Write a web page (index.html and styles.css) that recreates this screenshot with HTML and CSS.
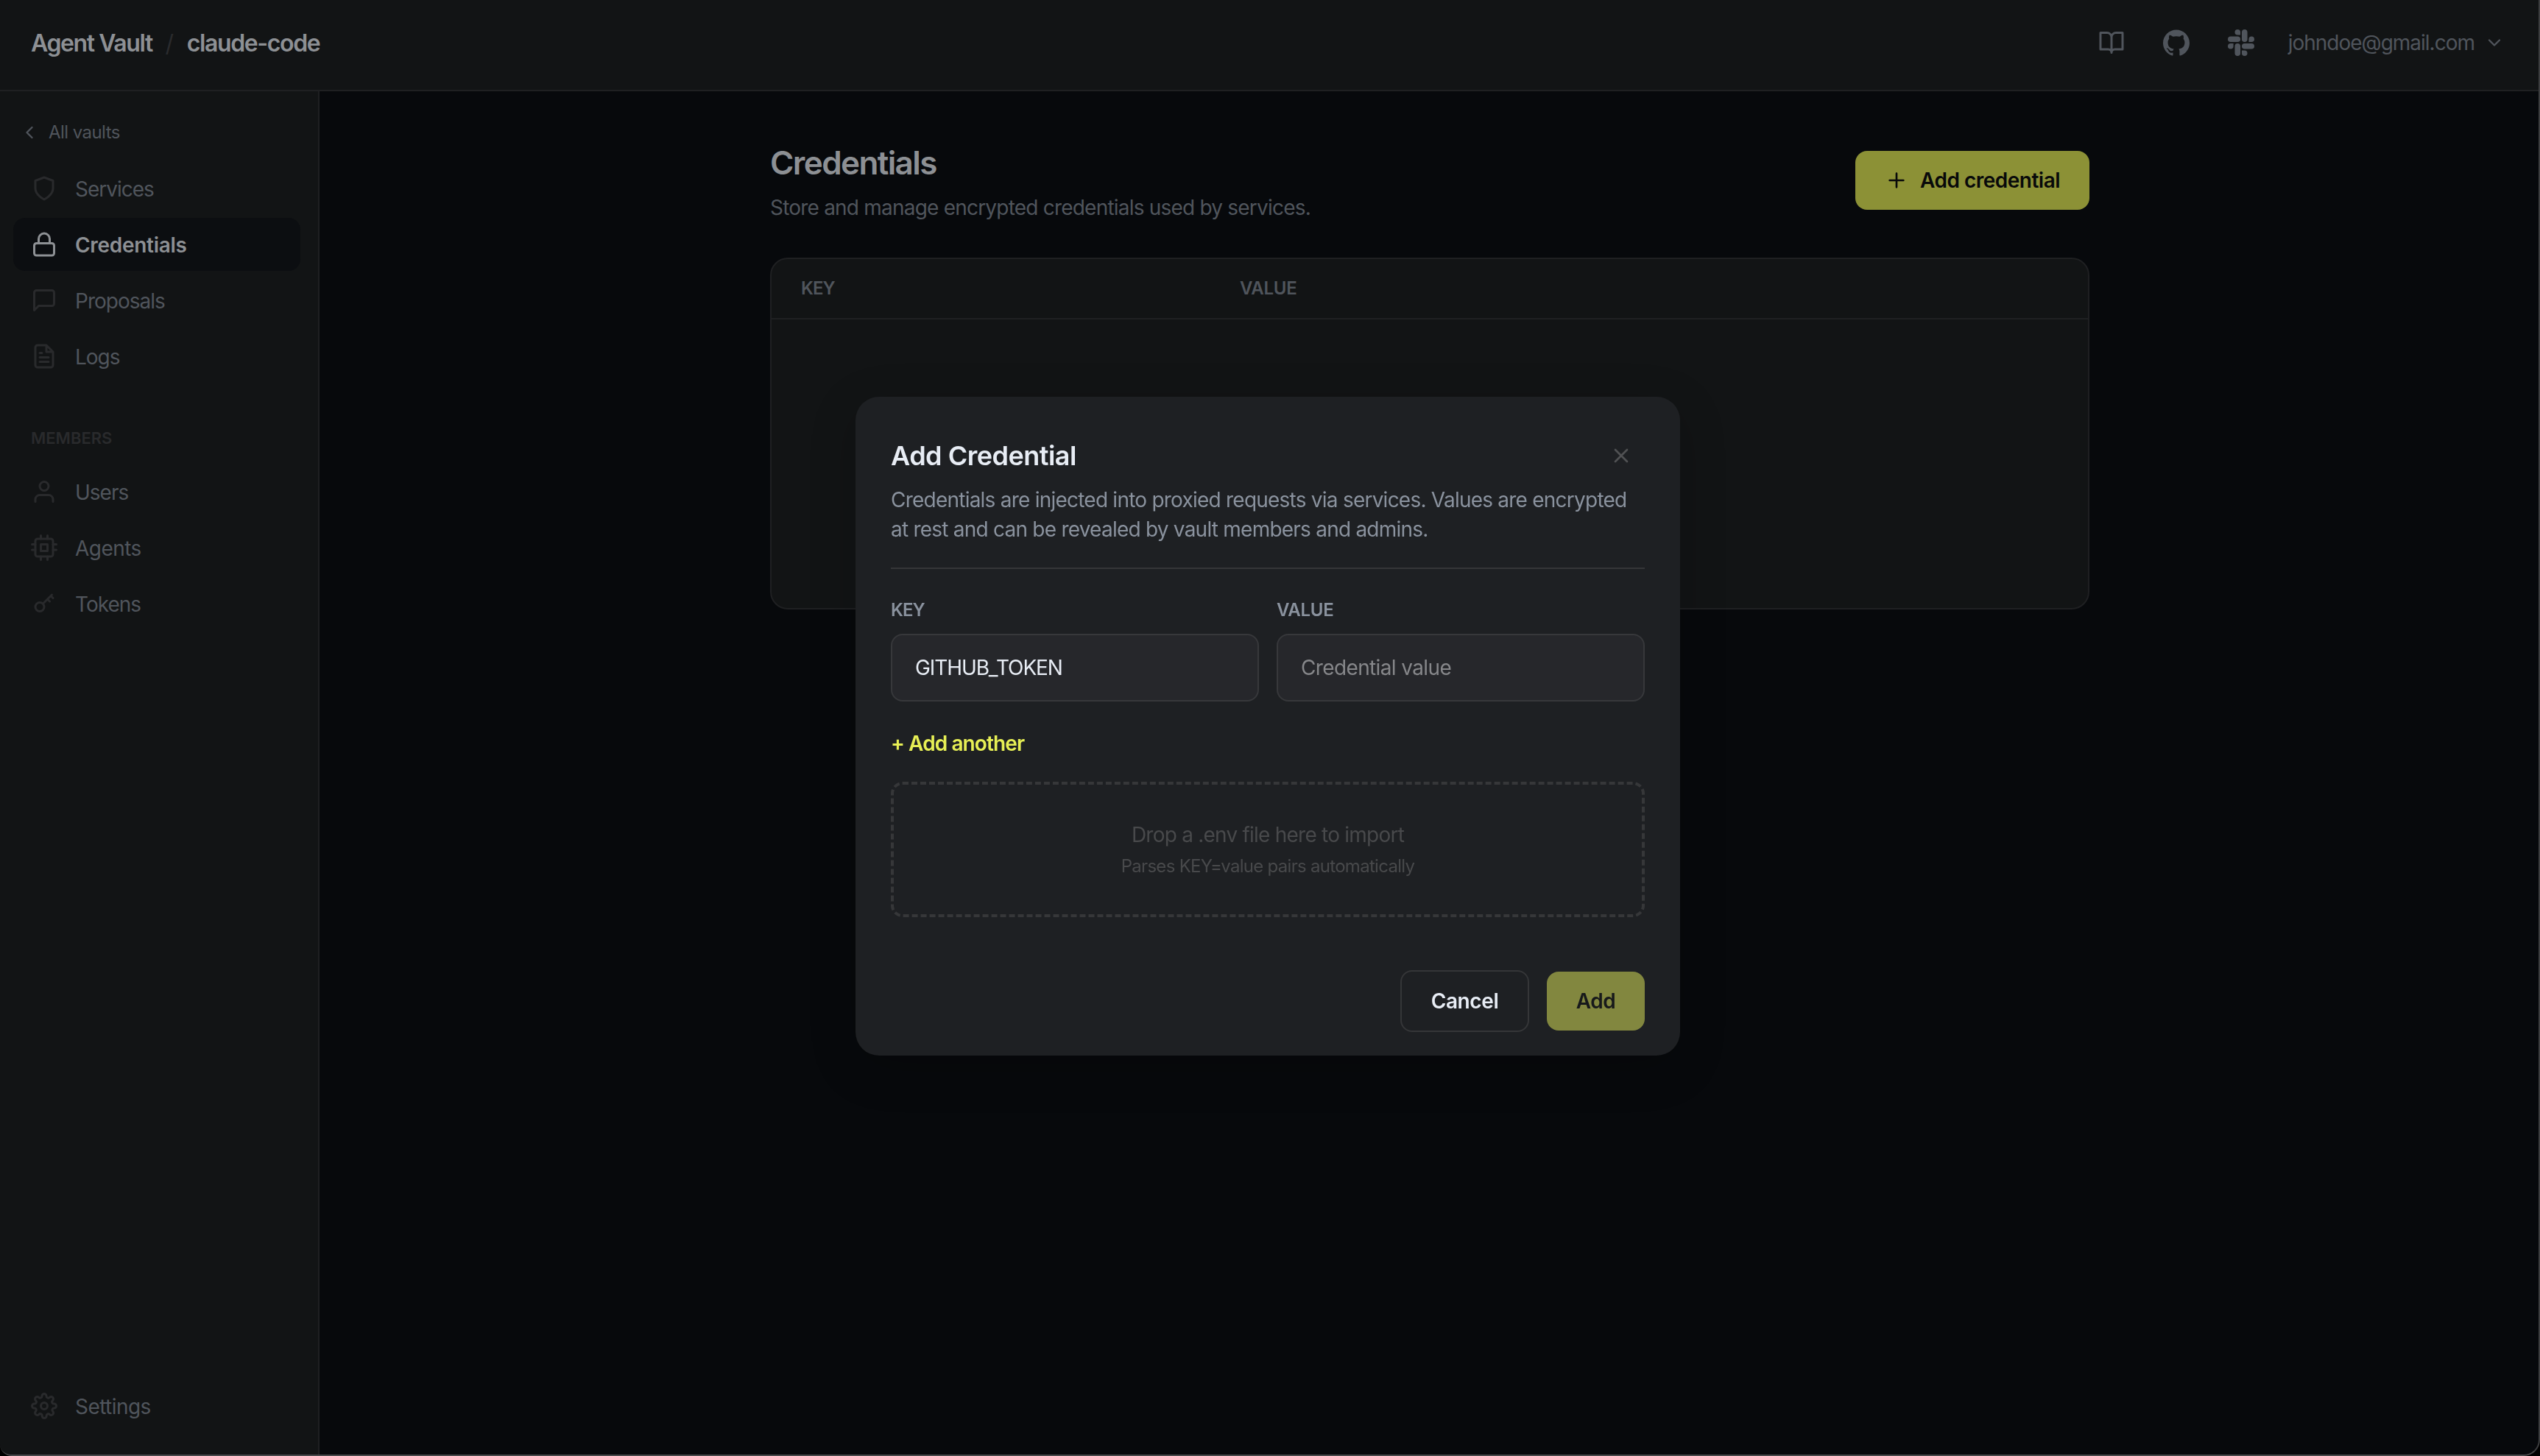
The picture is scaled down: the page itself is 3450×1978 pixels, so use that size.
FILE: index.html
```html
<!DOCTYPE html>
<html lang="en">
<head>
<meta charset="utf-8">
<title>Agent Vault</title>
<link rel="stylesheet" href="styles.css">
</head>
<body>
<div class="window">
  <header class="topbar">
    <div class="crumbs">
      <span class="brand">Agent Vault</span>
      <span class="slash">/</span>
      <span class="vault">claude-code</span>
    </div>
    <div class="topbar-links">
      <svg class="icon" viewBox="0 0 24 24"><path d="M2 3h6a4 4 0 0 1 4 4v14a3 3 0 0 0-3-3H2zM22 3h-6a4 4 0 0 0-4 4v14a3 3 0 0 1 3-3h7z"/></svg>
      <svg class="icon solid" viewBox="0 0 24 24"><path d="M12 .297c-6.63 0-12 5.373-12 12 0 5.303 3.438 9.8 8.205 11.385.6.113.82-.258.82-.577 0-.285-.01-1.04-.015-2.04-3.338.724-4.042-1.61-4.042-1.61C4.422 18.07 3.633 17.7 3.633 17.7c-1.087-.744.084-.729.084-.729 1.205.084 1.838 1.236 1.838 1.236 1.07 1.835 2.809 1.305 3.495.998.108-.776.417-1.305.76-1.605-2.665-.3-5.466-1.332-5.466-5.93 0-1.31.465-2.38 1.235-3.22-.135-.303-.54-1.523.105-3.176 0 0 1.005-.322 3.3 1.23.96-.267 1.98-.399 3-.405 1.02.006 2.04.138 3 .405 2.28-1.552 3.285-1.23 3.285-1.23.645 1.653.24 2.873.12 3.176.765.84 1.23 1.91 1.23 3.22 0 4.61-2.805 5.625-5.475 5.92.42.36.81 1.096.81 2.22 0 1.606-.015 2.896-.015 3.286 0 .315.21.69.825.57C20.565 22.092 24 17.592 24 12.297c0-6.627-5.373-12-12-12"/></svg>
      <svg class="icon solid" viewBox="0 0 24 24"><path d="M5.042 15.165a2.528 2.528 0 0 1-2.52 2.523A2.528 2.528 0 0 1 0 15.165a2.527 2.527 0 0 1 2.522-2.52h2.52v2.52zM6.313 15.165a2.527 2.527 0 0 1 2.521-2.52 2.527 2.527 0 0 1 2.521 2.52v6.313A2.528 2.528 0 0 1 8.834 24a2.528 2.528 0 0 1-2.521-2.522v-6.313zM8.834 5.042a2.528 2.528 0 0 1-2.521-2.52A2.528 2.528 0 0 1 8.834 0a2.528 2.528 0 0 1 2.521 2.522v2.52H8.834zM8.834 6.313a2.528 2.528 0 0 1 2.521 2.521 2.528 2.528 0 0 1-2.521 2.521H2.522A2.528 2.528 0 0 1 0 8.834a2.528 2.528 0 0 1 2.522-2.521h6.312zM18.956 8.834a2.528 2.528 0 0 1 2.522-2.521A2.528 2.528 0 0 1 24 8.834a2.528 2.528 0 0 1-2.522 2.521h-2.522V8.834zM17.688 8.834a2.528 2.528 0 0 1-2.523 2.521 2.527 2.527 0 0 1-2.52-2.521V2.522A2.527 2.527 0 0 1 15.165 0a2.528 2.528 0 0 1 2.523 2.522v6.312zM15.165 18.956a2.528 2.528 0 0 1 2.523 2.522A2.528 2.528 0 0 1 15.165 24a2.527 2.527 0 0 1-2.52-2.522v-2.522h2.52zM15.165 17.688a2.527 2.527 0 0 1-2.52-2.523 2.526 2.526 0 0 1 2.52-2.52h6.313A2.527 2.527 0 0 1 24 15.165a2.528 2.528 0 0 1-2.522 2.523h-6.313z"/></svg>
    </div>
    <div class="account">
      <span class="email">johndoe@gmail.com</span>
      <svg class="icon chevron" viewBox="0 0 24 24"><path d="m6 9 6 6 6-6"/></svg>
    </div>
  </header>

  <div class="body">
    <aside class="sidebar">
      <a class="back">
        <svg class="icon chevron" viewBox="0 0 24 24"><path d="m15 18-6-6 6-6"/></svg>
        <span class="back-label">All vaults</span>
      </a>
      <nav class="nav">
        <a class="nav-item"><svg class="icon" viewBox="0 0 24 24"><path d="M12 22s8-4 8-10V5l-8-3-8 3v7c0 6 8 10 8 10z"/></svg><span>Services</span></a>
        <a class="nav-item active"><svg class="icon" viewBox="0 0 24 24"><rect x="3" y="11" width="18" height="11" rx="2"/><path d="M7 11V7a5 5 0 0 1 10 0v4"/></svg><span>Credentials</span></a>
        <a class="nav-item"><svg class="icon" viewBox="0 0 24 24"><path d="M21 15a2 2 0 0 1-2 2H7l-4 4V5a2 2 0 0 1 2-2h14a2 2 0 0 1 2 2z"/></svg><span>Proposals</span></a>
        <a class="nav-item"><svg class="icon" viewBox="0 0 24 24"><path d="M14 2H6a2 2 0 0 0-2 2v16a2 2 0 0 0 2 2h12a2 2 0 0 0 2-2V8zM14 2v6h6M16 13H8M16 17H8M10 9H8"/></svg><span>Logs</span></a>
      </nav>
      <h2 class="nav-heading">MEMBERS</h2>
      <nav class="nav">
        <a class="nav-item"><svg class="icon" viewBox="0 0 24 24"><path d="M20 21v-2a4 4 0 0 0-4-4H8a4 4 0 0 0-4 4v2"/><circle cx="12" cy="7" r="4"/></svg><span>Users</span></a>
        <a class="nav-item nav-loose"><svg class="icon" viewBox="0 0 24 24"><rect x="4" y="4" width="16" height="16" rx="2"/><path d="M9 9h6v6H9zM9 1v3M15 1v3M9 20v3M15 20v3M20 9h3M20 14h3M1 9h3M1 14h3"/></svg><span>Agents</span></a>
        <a class="nav-item"><svg class="icon" viewBox="0 0 24 24"><circle cx="8" cy="15" r="4"/><path d="M10.85 12.15 19 4M18 5l2 2M15 8l2 2"/></svg><span>Tokens</span></a>
      </nav>
      <nav class="nav nav-bottom">
        <a class="nav-item nav-loose"><svg class="icon" viewBox="0 0 24 24"><circle cx="12" cy="12" r="3"/><path d="M19.4 15a1.65 1.65 0 0 0 .33 1.82l.06.06a2 2 0 0 1-2.83 2.83l-.06-.06a1.65 1.65 0 0 0-2.8 1.17V21a2 2 0 0 1-4 0v-.09a1.65 1.65 0 0 0-2.88-1.26l-.06.06a2 2 0 0 1-2.83-2.83l.06-.06A1.65 1.65 0 0 0 3.09 14H3a2 2 0 0 1 0-4h.09a1.65 1.65 0 0 0 1.26-2.88l-.06-.06a2 2 0 0 1 2.83-2.83l.06.06A1.65 1.65 0 0 0 10 3.09V3a2 2 0 0 1 4 0v.09a1.65 1.65 0 0 0 2.82 1.2l.06-.06a2 2 0 0 1 2.83 2.83l-.06.06A1.65 1.65 0 0 0 20.91 10H21a2 2 0 0 1 0 4h-.09a1.65 1.65 0 0 0-1.51 1z"/></svg><span>Settings</span></a>
      </nav>
    </aside>

    <main class="main">
      <div class="page">
        <div class="page-head">
          <div>
            <h1 class="page-title">Credentials</h1>
            <p class="page-sub">Store and manage encrypted credentials used by services.</p>
          </div>
          <button class="btn btn-accent btn-new"><svg class="icon" viewBox="0 0 24 24"><path d="M12 5v14M5 12h14"/></svg><span>Add credential</span></button>
        </div>
        <section class="table">
          <div class="table-head"><span class="key">KEY</span><span class="value">VALUE</span></div>
        </section>
      </div>
    </main>
  </div>
</div>

<div class="overlay">
  <div class="dialog" role="dialog">
    <div class="dialog-head">
      <h2 class="dialog-title">Add Credential</h2>
      <button class="close"><svg class="icon" viewBox="0 0 24 24"><path d="M18 6 6 18M6 6l12 12"/></svg></button>
    </div>
    <p class="dialog-text">Credentials are injected into proxied requests via services. Values are encrypted<br>at rest and can be revealed by vault members and admins.</p>
    <div class="fields">
      <div class="field"><span class="label key">KEY</span><div class="input"><span class="filled">GITHUB_TOKEN</span></div></div>
      <div class="field"><span class="label value">VALUE</span><div class="input"><span class="placeholder">Credential value</span></div></div>
    </div>
    <div class="add-another">+ Add another</div>
    <div class="drop">
      <div class="drop-title">Drop a .env file here to import</div>
      <div class="drop-hint">Parses KEY=value pairs automatically</div>
    </div>
    <div class="actions">
      <button class="btn btn-outline">Cancel</button>
      <button class="btn btn-accent btn-disabled">Add</button>
    </div>
  </div>
</div>
</body>
</html>
```
FILE: styles.css
```css
* { box-sizing: border-box; }

body {
  margin: 0;
  background: #000;
  font-family: Inter, "Liberation Sans", sans-serif;
  font-size: 28px;
  color: #50555c;
}

h1, h2, p { margin: 0; }
button { font: inherit; color: inherit; border: 0; background: none; padding: 0; margin: 0; }

.icon {
  display: block;
  flex: none;
  width: 36px;
  height: 36px;
  fill: none;
  stroke: currentColor;
  stroke-width: 2;
  stroke-linecap: round;
  stroke-linejoin: round;
}
.icon.solid { fill: currentColor; stroke: none; }
.icon.chevron { width: 28px; height: 28px; }

.window {
  display: flex;
  flex-direction: column;
  height: 1978px;
  overflow: hidden;
  background: #07090c;
  border-right: 2px solid #3c3d3f;
  border-bottom: 2px solid #48494b;
  border-radius: 0 0 22px 16px;
}

.topbar {
  display: flex;
  flex: none;
  align-items: center;
  height: 124px;
  padding: 0 46px 6px 42px;
  background: #121415;
  border-bottom: 2px solid #1f2022;
}
.crumbs { display: flex; gap: 15px; font-size: 32px; font-weight: 600; letter-spacing: -1.4px; color: #8d9094; }
.slash { width: 17px; font-weight: 400; letter-spacing: 0; text-align: center; color: #2a2b2d; }
.topbar-links { display: flex; gap: 52px; margin-left: auto; }
.account { display: flex; align-items: center; gap: 13px; margin-left: 46px; }
.email { letter-spacing: -1px; }

.body { display: flex; flex: 1; }

.sidebar {
  display: flex;
  flex-direction: column;
  width: 434px;
  padding: 24px 24px 30px 18px;
  background: #121415;
  border-right: 2px solid #1f2022;
}
.back { display: flex; align-items: center; gap: 12px; height: 64px; margin-bottom: 8px; padding-left: 8px; font-size: 24px; letter-spacing: -0.55px; }
.back-label { padding-bottom: 2px; }
.nav { display: flex; flex-direction: column; gap: 4px; }
.nav-item { display: flex; align-items: center; gap: 24px; height: 72px; padding: 0 24px; border-radius: 16px; letter-spacing: -1px; }
.nav-item span { padding-top: 1px; }
.nav-item.nav-loose { letter-spacing: -0.55px; }
.nav-item .icon { color: #292a2c; }
.nav-item.active { background: #0c0e11; color: #8d9094; font-weight: 600; letter-spacing: -0.3px; }
.nav-item.active .icon { color: #8d9094; }
.nav-heading { margin: 53px 0 15px; padding-left: 24px; font-size: 22px; line-height: 44px; font-weight: 600; color: #292a2c; }
.nav-bottom { margin-top: auto; }

.main { flex: 1; padding: 67px 0 0 612px; }
.page { width: 1792px; }
.page-head { display: flex; justify-content: space-between; align-items: flex-start; margin-bottom: 47px; }
.page-title { font-size: 44px; line-height: 60px; font-weight: 600; letter-spacing: -1.6px; color: #8d9094; }
.page-sub { margin-top: 10px; line-height: 42px; letter-spacing: -0.79px; }

.btn { display: flex; align-items: center; justify-content: center; height: 80px; border-radius: 16px; font-weight: 600; letter-spacing: -0.4px; }
.btn-accent { background: #8c9136; color: #08090a; }
.btn-new { gap: 16px; width: 318px; margin-top: 14px; padding-left: 40px; justify-content: flex-start; letter-spacing: -0.5px; }
.btn-new .icon { width: 32px; height: 32px; }

.table { height: 478px; background: #121415; border: 2px solid #1f2022; border-radius: 24px; }
.table-head {
  display: grid;
  grid-template-columns: 596px 1fr;
  justify-items: start;
  align-items: center;
  height: 82px;
  padding: 0 40px 1px;
  border-bottom: 2px solid #1f2022;
  font-size: 24px;
  font-weight: 600;
}
.key { letter-spacing: -0.9px; }
.value { letter-spacing: -0.3px; }

.overlay { position: fixed; inset: 0; display: flex; align-items: flex-start; padding: 539px 0 0 1162px; }
.dialog {
  width: 1120px;
  padding: 52px 48px 32px;
  background: #1e2023;
  border-radius: 32px;
  box-shadow: 0 16px 64px rgba(0, 0, 0, 0.2);
}
.dialog-head { display: flex; justify-content: space-between; align-items: center; height: 56px; }
.dialog-title { font-size: 36px; line-height: 56px; font-weight: 600; letter-spacing: -0.5px; color: #e8edf5; }
.close { display: flex; align-items: center; justify-content: center; width: 64px; height: 56px; color: #505153; }
.close .icon { width: 32px; height: 32px; }
.dialog-text { margin-top: 12px; padding-bottom: 32px; border-bottom: 2px solid #353638; line-height: 40px; white-space: nowrap; letter-spacing: -0.77px; color: #8a929e; }
.fields { display: grid; grid-template-columns: 1fr 1fr; gap: 24px; margin-top: 41px; }
.field { display: flex; flex-direction: column; align-items: stretch; gap: 17px; }
.label { align-self: flex-start; font-size: 24px; line-height: 30px; font-weight: 600; color: #8a929e; }
.input { display: flex; align-items: center; height: 92px; padding: 0 31px; background: #26272b; border: 2px solid #37383b; border-radius: 16px; color: #e8edf5; }
.filled { letter-spacing: -1.1px; }
.placeholder { letter-spacing: -0.63px; color: #86878a; }
.add-another { margin-top: 37px; line-height: 40px; font-weight: 600; letter-spacing: -0.9px; color: #e7ef55; }
.drop { height: 184px; margin-top: 32px; padding-top: 48px; border: 4px dashed #363739; border-radius: 16px; text-align: center; color: #48494b; }
.drop-title { line-height: 40px; letter-spacing: -0.77px; }
.drop-hint { margin-top: 5px; font-size: 24px; line-height: 36px; letter-spacing: -0.71px; }
.actions { display: flex; justify-content: flex-end; align-items: center; gap: 24px; height: 84px; margin-top: 72px; }
.btn-outline { width: 175px; height: 84px; border: 2px solid #353638; color: #e8edf5; }
.btn-disabled { width: 133px; background: #82873f; color: #17191b; }
```
